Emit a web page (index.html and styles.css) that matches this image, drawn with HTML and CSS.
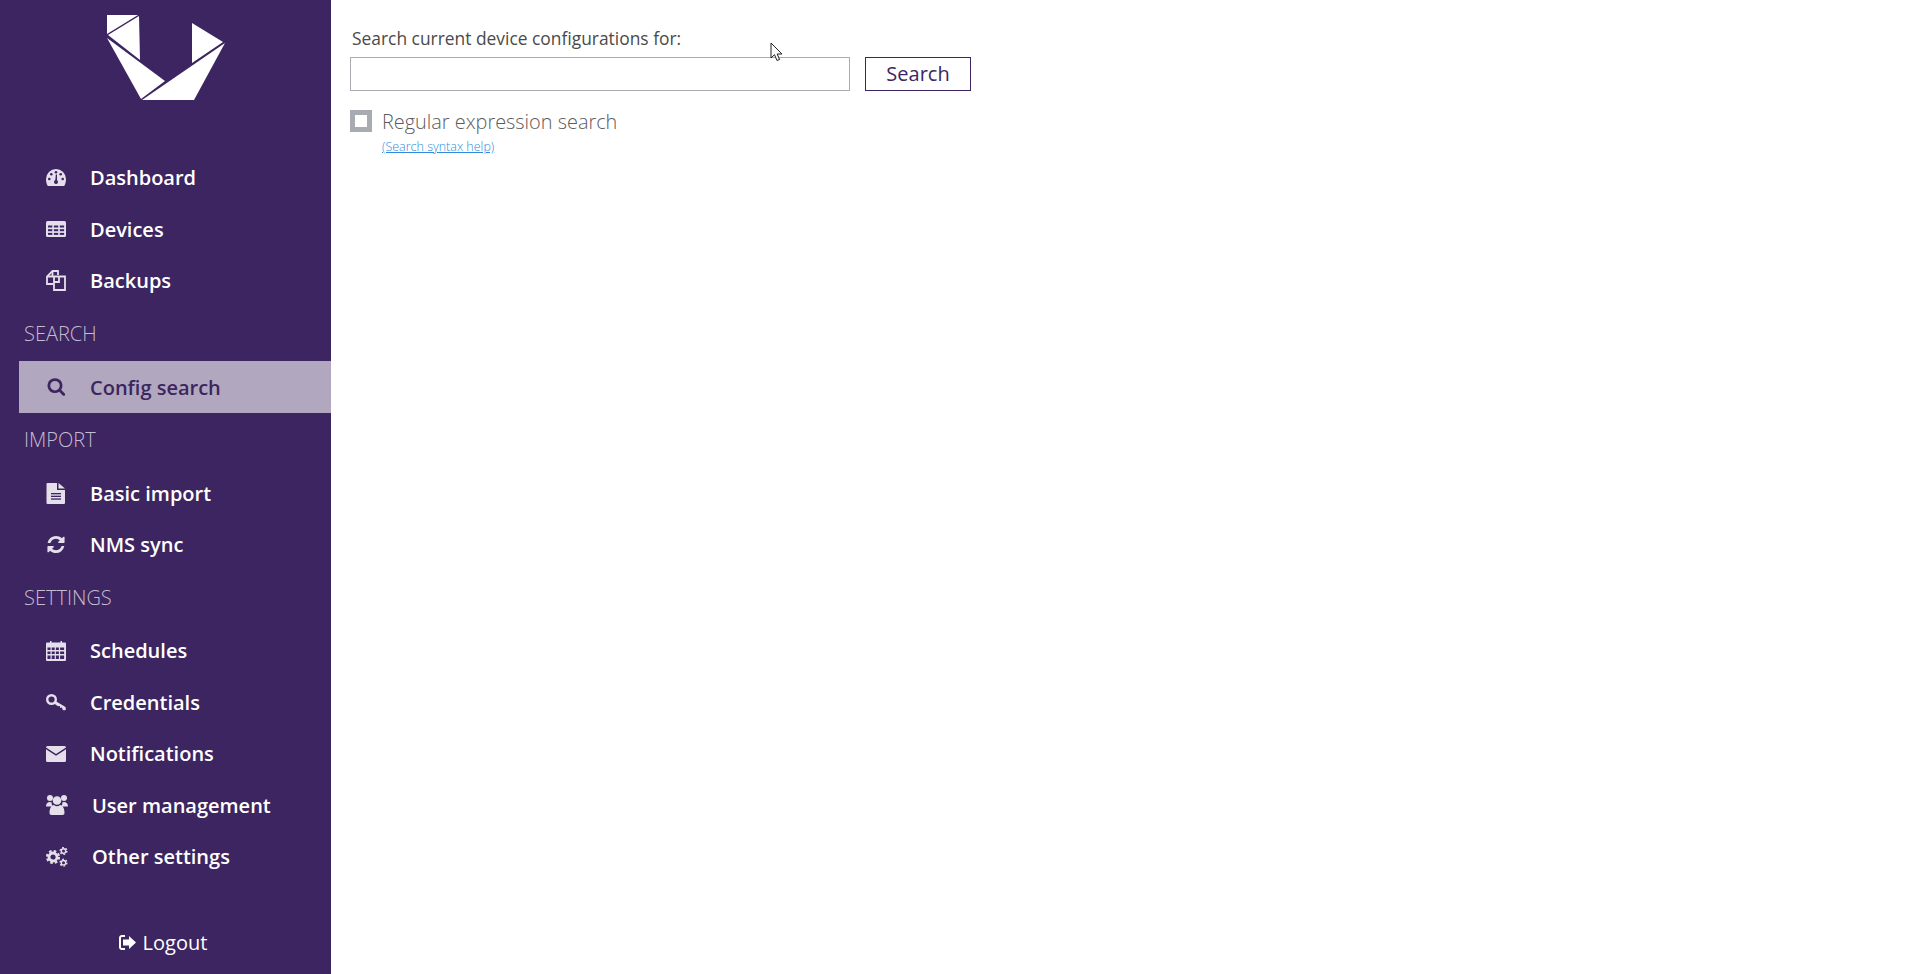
FILE: index.html
```html
<!DOCTYPE html>
<html lang="en">
<head>
  <meta charset="UTF-8" />
  <title>Config search</title>
  <link rel="stylesheet" href="styles.css">
</head>
<body>
<div class="sidebar">
  <div class="logo">
    <svg width="118" height="85" viewBox="0 0 118 85">
      <polygon points="0,0 31,0 0,19" />
      <polygon points="32,1 33,45 1,20" />
      <polygon points="0,23 58,66 34,84" />
      <polygon points="35,85 118,28 87,85" />
      <polygon points="85,8 116,27 85,48" />
    </svg>
  </div>
  <ul class="nav">
    <li class="item">
      <svg class="icon" width="20" height="17" viewBox="0 0 20 17"><path d="M10 0A10 10 0 0 0 0 10c0 2.700.6 4.800 1.300 6.300.2.500.6.700 1.100.7h15.200c.5 0 .9-.2 1.100-.7.700-1.500 1.300-3.600 1.300-6.300A10 10 0 0 0 10 0z"/><g class="hole"><circle cx="3.300" cy="10" r="1.300"/><circle cx="5.300" cy="5.200" r="1.300"/><circle cx="10" cy="3.300" r="1.300"/><circle cx="14.700" cy="5.200" r="1.300"/><circle cx="16.700" cy="10" r="1.300"/><circle cx="10" cy="13" r="2"/><polygon points="9.200,12 9.800,5.500 11,5.500 11,12"/></g></svg>
      <span>Dashboard</span>
    </li>
    <li class="item">
      <svg class="icon" width="20" height="16" viewBox="0 0 20 16"><rect width="20" height="16" rx="1.500"/><g class="hole"><rect x="2" y="4.500" width="4.300" height="2"/><rect x="7.900" y="4.500" width="4.300" height="2"/><rect x="13.800" y="4.500" width="4.300" height="2"/><rect x="2" y="8.200" width="4.300" height="2"/><rect x="7.900" y="8.200" width="4.300" height="2"/><rect x="13.800" y="8.200" width="4.300" height="2"/><rect x="2" y="11.900" width="4.300" height="2"/><rect x="7.900" y="11.900" width="4.300" height="2"/><rect x="13.800" y="11.900" width="4.300" height="2"/></g></svg>
      <span>Devices</span>
    </li>
    <li class="item">
      <svg class="icon" width="20" height="21" viewBox="0 0 20 21"><path class="line" d="M12 5V1H6.500L1 6.500V14h6"/><path class="line" d="M6.500 1v5.500H1"/><path class="line" d="M13 6.500H8V20h11V6.500z"/><path class="line" d="M13 6.500V12H8"/></svg>
      <span>Backups</span>
    </li>
    <li class="section">SEARCH</li>
    <li class="item active">
      <svg class="icon" width="20" height="18" viewBox="-80 128 1888 1664"><path d="M1216 832q0-185-131.500-316.500t-316.500-131.500-316.500 131.500-131.500 316.500 131.500 316.500 316.500 131.500 316.500-131.500 131.500-316.500zm512 832q0 52-38 90t-90 38q-54 0-90-38l-343-342q-179 124-399 124-143 0-273.500-55.500t-225-150-150-225-55.500-273.500 55.500-273.500 150-225 225-150 273.500-55.500 273.500 55.500 225 150 150 225 55.500 273.500q0 220-124 399l343 343q37 37 37 90z"/></svg>
      <span>Config search</span>
    </li>
    <li class="section">IMPORT</li>
    <li class="item">
      <svg class="icon" width="20" height="21" viewBox="0 0 20 21"><path d="M1.500 0H11v7h8v13a1 1 0 0 1-1 1H1.500a1 1 0 0 1-1-1V1a1 1 0 0 1 1-1z"/><polygon points="12.500,0 19,5.500 12.500,5.500"/><g class="hole"><rect x="5" y="10" width="10" height="1.300"/><rect x="5" y="12.700" width="10" height="1.300"/><rect x="5" y="15.400" width="10" height="1.300"/></g></svg>
      <span>Basic import</span>
    </li>
    <li class="item">
      <svg class="icon" width="20" height="19" viewBox="0 128 1792 1536"><path d="M1639 1056q0 5-1 7-64 268-268 434.500t-478 166.500q-146 0-282.500-55t-243.500-157l-129 129q-19 19-45 19t-45-19-19-45v-448q0-26 19-45t45-19h448q26 0 45 19t19 45-19 45l-137 137q71 66 161 102t187 36q134 0 250-65t186-179q11-17 53-117 8-23 30-23h192q13 0 22.500 9.500t9.500 22.500zm25-800v448q0 26-19 45t-45 19h-448q-26 0-45-19t-19-45 19-45l138-138q-148-137-349-137-134 0-250 65t-186 179q-11 17-53 117-8 23-30 23h-199q-13 0-22.500-9.500t-9.500-22.500v-7q65-268 270-434.500t480-166.500q146 0 284 55.500t245 156.500l130-129q19-19 45-19t45 19 19 45z"/></svg>
      <span>NMS sync</span>
    </li>
    <li class="section">SETTINGS</li>
    <li class="item">
      <svg class="icon" width="20" height="21" viewBox="0 0 20 21"><path d="M1 2.500h3V1h1.500v1.500h9V1H16v1.500h3a1 1 0 0 1 1 1V20a1 1 0 0 1-1 1H1a1 1 0 0 1-1-1V3.500a1 1 0 0 1 1-1z"/><g class="hole"><rect x="1.500" y="7.500" width="3" height="2.500"/><rect x="5.700" y="7.500" width="3" height="2.500"/><rect x="9.900" y="7.500" width="3" height="2.500"/><rect x="14.100" y="7.500" width="4" height="2.500"/><rect x="1.500" y="11.500" width="3" height="2.500"/><rect x="5.700" y="11.500" width="3" height="2.500"/><rect x="9.900" y="11.500" width="3" height="2.500"/><rect x="14.100" y="11.500" width="4" height="2.500"/><rect x="1.500" y="15.500" width="3" height="3.500"/><rect x="5.700" y="15.500" width="3" height="3.500"/><rect x="9.900" y="15.500" width="3" height="3.500"/><rect x="14.100" y="15.500" width="4" height="3.500"/></g></svg>
      <span>Schedules</span>
    </li>
    <li class="item">
      <svg class="icon" width="20" height="17" viewBox="0 0 20 17"><circle class="key-bow" cx="5.500" cy="5.500" r="4.300"/><polygon points="9.500,7 19.500,13 20,15.500 18,16.500 16.500,15.500 16,13.500 14.300,14 13.800,12 12,12.200 8,9.500"/></svg>
      <span>Credentials</span>
    </li>
    <li class="item">
      <svg class="icon" width="20" height="16" viewBox="0 0 20 16"><path d="M0 3.200V14.500A1.500 1.500 0 0 0 1.500 16h17a1.500 1.500 0 0 0 1.500-1.500V3.200L10 9.800z"/><path d="M1.500 0A1.500 1.500 0 0 0 0 1.500L10 8l10-6.500A1.500 1.500 0 0 0 18.500 0z"/></svg>
      <span>Notifications</span>
    </li>
    <li class="item">
      <svg class="icon" width="22" height="20" viewBox="0 0 22 20"><circle cx="4" cy="3" r="3"/><circle cx="18" cy="3" r="3"/><circle cx="11" cy="5.500" r="4.300"/><path d="M0 11.500c0-3 1.500-4.500 4-4.500 .8 0 1.300.2 1.700.6-.2 1.400.2 2.800 1 3.900H0z"/><path d="M22 11.500c0-3-1.500-4.500-4-4.500-.8 0-1.300.2-1.700.6 .2 1.400-.2 2.800-1 3.900H22z"/><path d="M3.500 18c0-5 2-8 4.500-8 .8.800 1.800 1.200 3 1.200s2.200-.4 3-1.200c2.500 0 4.500 3 4.500 8 0 1.300-.8 2-2 2H5.500c-1.200 0-2-.7-2-2z"/></svg>
      <span>User management</span>
    </li>
    <li class="item">
      <svg class="icon" width="22" height="20" viewBox="0 0 22 20"><circle class="teeth" cx="7" cy="10" r="6"/><circle class="ring" cx="7" cy="10" r="4"/><circle class="teeth small" cx="17.500" cy="4" r="3.400"/><circle class="ring small" cx="17.500" cy="4" r="2.200"/><circle class="teeth small" cx="17.500" cy="15.700" r="3.400"/><circle class="ring small" cx="17.500" cy="15.700" r="2.200"/></svg>
      <span>Other settings</span>
    </li>
  </ul>
  <div class="logout">
    <svg width="17" height="15" viewBox="0 0 17 15"><path d="M6 0H3C1.300 0 0 1.300 0 3v9c0 1.700 1.300 3 3 3h3v-2H3c-.6 0-1-.4-1-1V3c0-.6.4-1 1-1h3z"/><path d="M10 1l7 6.500-7 6.500v-3.500H4v-6h6z"/></svg>
    <span>Logout</span>
  </div>
</div>

<div class="main">
  <label class="search-label">Search current device configurations for:</label>
  <div class="search-row">
    <input class="search-input" type="text">
    <button class="search-btn">Search</button>
  </div>
  <div class="regex-row">
    <span class="checkbox"></span>
    <div>
      <div class="regex-label">Regular expression search</div>
      <a class="help-link" href="#">(Search syntax help)</a>
    </div>
  </div>
  <svg class="cursor" width="14" height="21" viewBox="0 0 14 21"><path d="M1 1v15l3.500-3.300L7 18.500l2.600-1-2.400-5.500H12z"/></svg>
</div>
</body>
</html>
```

FILE: styles.css
```css
* { box-sizing: border-box; }
body {
  margin: 0;
  height: 100vh;
  display: flex;
  overflow: hidden;
  font-family: "Open Sans", sans-serif;
  background: #fff;
}
.sidebar {
  width: 331px;
  flex-shrink: 0;
  display: flex;
  flex-direction: column;
  background: #3c2560;
  color: #fff;
}
.logo {
  height: 152px;
  padding-top: 15px;
  display: flex;
  justify-content: center;
  align-items: flex-start;
}
.logo polygon { fill: #fff; }
.nav {
  list-style: none;
  margin: 0;
  padding: 0 0 0 19px;
}
.item {
  height: 51.5px;
  padding-left: 27px;
  display: flex;
  align-items: center;
  gap: 24px;
  font-size: 20px;
  font-weight: 600;
}
.item.active {
  height: 52px;
  background: #b1a8bf;
  color: #3c2560;
}
.icon {
  flex-shrink: 0;
  fill: #e4dfea;
}
.active .icon { fill: #3c2560; }
.hole { fill: #3c2560; }
.line {
  fill: none;
  stroke: #e4dfea;
  stroke-width: 1.800;
}
.key-bow {
  fill: none;
  stroke: #e4dfea;
  stroke-width: 2.400;
}
.teeth {
  fill: none;
  stroke: #e4dfea;
  stroke-width: 2.200;
  stroke-dasharray: 2.600 2.110;
}
.ring {
  fill: none;
  stroke: #e4dfea;
  stroke-width: 2.800;
}
.teeth.small {
  stroke-width: 1.400;
  stroke-dasharray: 1.800 1.760;
}
.ring.small { stroke-width: 1.400; }
.section {
  height: 54.5px;
  padding: 13px 0 0 5px;
  font-size: 20px;
  font-weight: 300;
  color: #c4bccf;
}
.logout {
  margin-top: auto;
  height: 62px;
  padding: 0 5px 2px 0;
  display: flex;
  justify-content: center;
  align-items: center;
  gap: 7px;
  font-size: 20px;
}
.logout svg { fill: #fff; }
.main {
  position: relative;
  flex: 1;
  padding: 25px 0 0 19px;
  color: #4a4a4a;
}
.search-label {
  display: block;
  margin-left: 2px;
  font-size: 17.400px;
  line-height: 26px;
}
.search-row {
  display: flex;
  gap: 15px;
  margin-top: 6px;
}
.search-input {
  width: 500px;
  height: 34px;
  border: 1px solid #aaacb3;
  background: #fff;
  outline: none;
}
.search-btn {
  width: 106px;
  height: 34px;
  border: 1px solid #3c2560;
  background: #fff;
  color: #3c2560;
  font-family: "Open Sans", sans-serif;
  font-size: 20px;
  line-height: 1;
  padding: 0;
}
.regex-row {
  display: flex;
  gap: 10px;
  margin-top: 19px;
}
.checkbox {
  width: 22px;
  height: 22px;
  flex-shrink: 0;
  border: 5px solid #a9abb3;
  background: #fff;
}
.regex-label {
  font-size: 19.900px;
  font-weight: 300;
  line-height: 24px;
  color: #5c5c5c;
}
.help-link {
  display: block;
  margin-top: 5px;
  font-size: 12.500px;
  font-weight: 300;
  line-height: 16px;
  color: #2f8ae0;
}
.cursor {
  position: absolute;
  left: 439px;
  top: 42px;
  fill: #fff;
  stroke: #222;
  stroke-width: 1;
}
```
